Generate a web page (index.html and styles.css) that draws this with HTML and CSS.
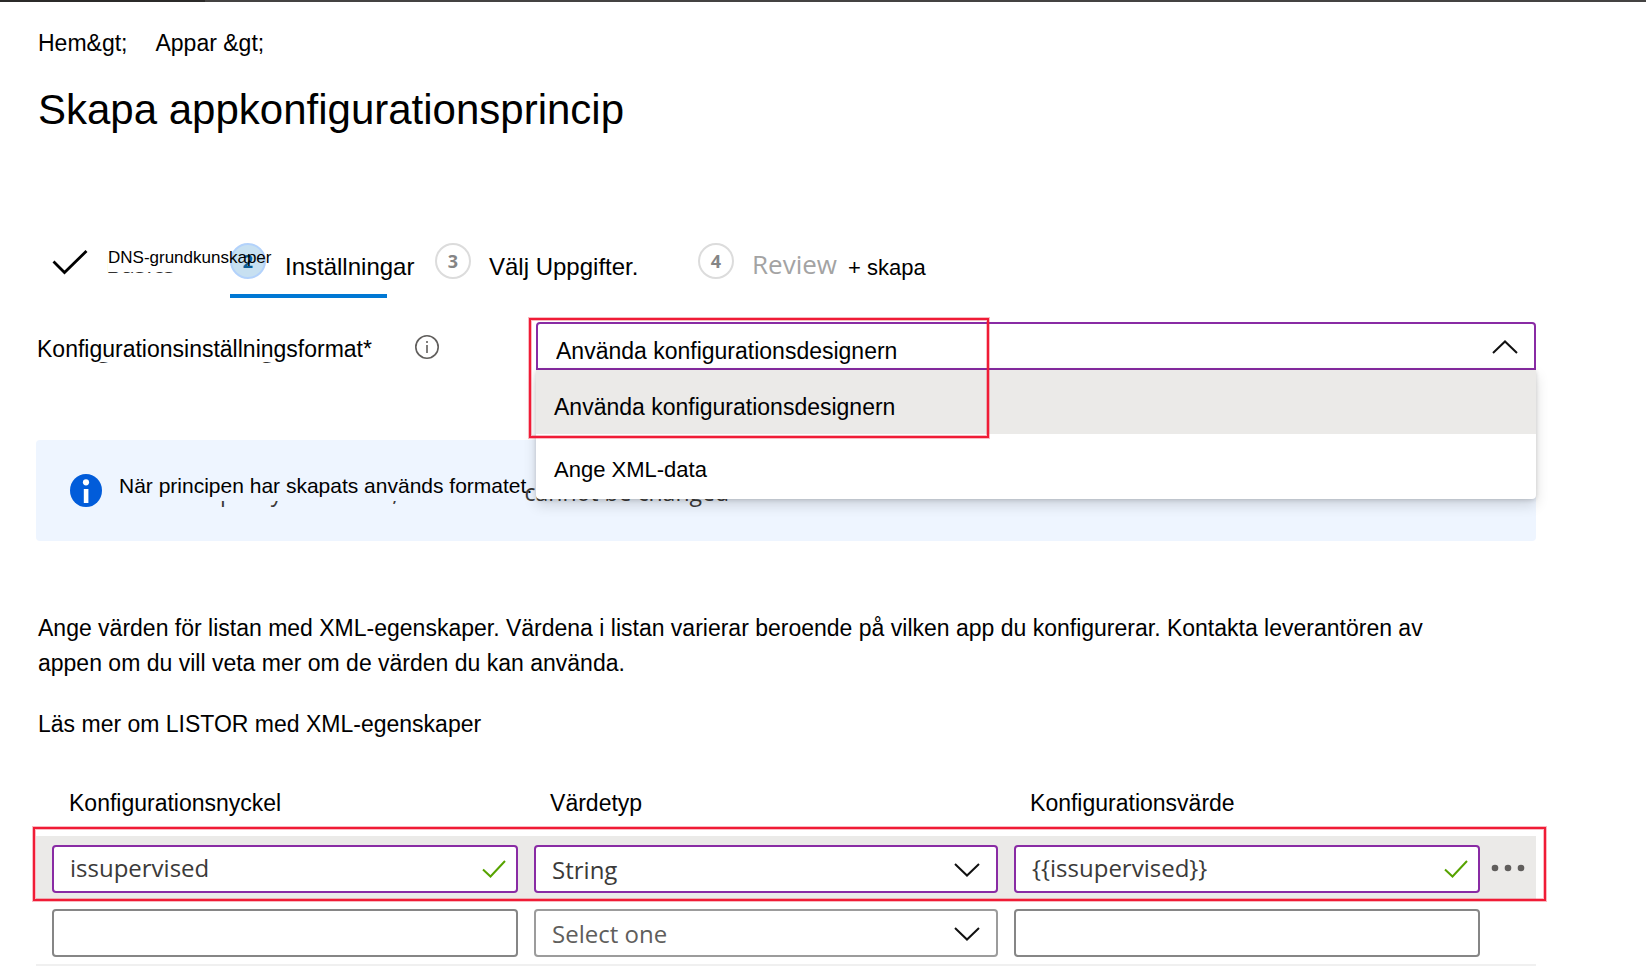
FILE: index.html
```html
<!DOCTYPE html>
<html lang="sv">
<head>
<meta charset="utf-8">
<title>Skapa appkonfigurationsprincip</title>
<link rel="stylesheet" href="styles.css">
</head>
<body>
<div class="topbar"><div class="topbar-brand"></div></div>
<main class="page">
  <nav class="breadcrumb">
    <a href="#hem">Hem&amp;gt;</a>
    <a href="#appar">Appar &amp;gt;</a>
  </nav>
  <h1 class="title">Skapa appkonfigurationsprincip</h1>

  <ol class="steps">
    <li class="step step-done">
      <svg class="step-check" viewBox="0 0 36 26" aria-hidden="true"><path d="M1.5 12.5 L12.5 23.5 L34.5 2"/></svg>
      <span class="step-stack">
        <span class="step-under">Basics</span>
        <span class="step-small">DNS-grundkunskaper</span>
      </span>
    </li>
    <li class="step step-active" aria-current="step">
      <span class="step-num">2</span><span class="step-text">Inställningar</span>
    </li>
    <li class="step step-third">
      <span class="step-num">3</span><span class="step-text">Välj Uppgifter.</span>
    </li>
    <li class="step">
      <span class="step-num">4</span><span class="step-review">Review</span><span class="step-create">+ skapa</span>
    </li>
  </ol>

  <div class="field">
    <div class="field-label">
      <span class="label-under" aria-hidden="true">Configuration settings</span>
      <label class="label-text" for="format">Konfigurationsinställningsformat*</label>
    </div>
    <svg class="field-info" viewBox="0 0 24 24" aria-hidden="true"><circle cx="12" cy="12" r="11.2"/><path d="M12 10v8"/><path d="M12 6v2"/></svg>
    <div class="combo">
      <select class="combo-select" id="format"><option>Använda konfigurationsdesignern</option></select>
      <svg class="chevron" viewBox="0 0 26 14" aria-hidden="true"><path d="M1 13 L13 1.5 L25 13"/></svg>
      <ul class="menu" role="listbox" aria-label="Format">
        <li class="menu-item menu-item-selected" role="option" aria-selected="true">Använda konfigurationsdesignern</li>
        <li class="menu-item" role="option" aria-selected="false">Ange XML-data</li>
      </ul>
      <div class="callout callout-combo"></div>
    </div>
  </div>

  <section class="banner">
    <svg class="banner-icon" viewBox="0 0 32 33" aria-hidden="true"><ellipse cx="16" cy="16.5" rx="16" ry="16.5" fill="#015cda"/><circle cx="16" cy="8.3" r="3.1" fill="#fff"/><path d="M13.8 15h4.6v14h-4.6z" fill="#fff"/></svg>
    <div class="banner-body">
      <span class="banner-under" aria-hidden="true">Once the policy is created, the format cannot be changed</span>
      <span class="banner-text">När principen har skapats används formatet.</span>
    </div>
  </section>

  <p class="copy">Ange värden för listan med XML-egenskaper. Värdena i listan varierar beroende på vilken app du konfigurerar. Kontakta leverantören av<br>appen om du vill veta mer om de värden du kan använda.</p>
  <p class="copy copy-link"><a href="#listor">Läs mer om LISTOR med XML-egenskaper</a></p>

  <table class="settings">
    <colgroup><col class="col-key"><col class="col-type"><col><col class="col-more"></colgroup>
    <thead>
      <tr><th id="h-key">Konfigurationsnyckel</th><th id="h-type">Värdetyp</th><th id="h-value">Konfigurationsvärde</th><td></td></tr>
    </thead>
    <tbody>
      <tr class="row-filled">
        <td><div class="control"><input class="box" type="text" value="issupervised" aria-labelledby="h-key"><svg class="valid" viewBox="0 0 24 18" aria-hidden="true"><path d="M1 9.5 L8.5 16.5 L23 1"/></svg></div></td>
        <td><div class="control"><select class="box" aria-labelledby="h-type"><option>String</option></select><svg class="chevron" viewBox="0 0 26 14" aria-hidden="true"><path d="M1 1 L13 12.5 L25 1"/></svg></div></td>
        <td><div class="control"><input class="box" type="text" value="{{issupervised}}" aria-labelledby="h-value"><svg class="valid" viewBox="0 0 24 18" aria-hidden="true"><path d="M1 9.5 L8.5 16.5 L23 1"/></svg></div></td>
        <td><button class="more" type="button" aria-label="Mer"><svg class="more-dots" viewBox="0 0 34 8" aria-hidden="true"><circle cx="4" cy="4" r="3.3"/><circle cx="17" cy="4" r="3.3"/><circle cx="30" cy="4" r="3.3"/></svg></button><div class="callout callout-row"></div></td>
      </tr>
      <tr class="row-empty">
        <td><div class="control"><input class="box" type="text" aria-labelledby="h-key"></div></td>
        <td><div class="control"><select class="box box-placeholder" aria-labelledby="h-type"><option>Select one</option></select><svg class="chevron" viewBox="0 0 26 14" aria-hidden="true"><path d="M1 1 L13 12.5 L25 1"/></svg></div></td>
        <td><div class="control"><input class="box" type="text" aria-labelledby="h-value"></div></td>
        <td></td>
      </tr>
    </tbody>
  </table>
</main>
</body>
</html>
```
FILE: styles.css
```css
* { box-sizing: border-box; }
body {
  margin: 0;
  background: #fff;
  color: #000;
  font: 23px/30px "Liberation Sans", Arial, sans-serif;
}
a { color: inherit; text-decoration: none; }
.topbar { height: 2px; background: #444342; }
.topbar-brand { width: 205px; height: 2px; background: #2b2a29; }
.page { padding: 26px 110px 0 36px; }

.breadcrumb { display: flex; gap: 28px; padding-left: 2px; }
.title {
  margin: 28px 0 0;
  padding-left: 2px;
  font-size: 42px;
  line-height: 48px;
  font-weight: 400;
}

/* Wizard steps */
.steps {
  display: flex;
  margin: 109px 0 0;
  padding: 0 0 0 16px;
  list-style: none;
  font-size: 24px;
  white-space: nowrap;
}
.step { position: relative; display: flex; flex: none; align-items: flex-start; height: 55px; }
.step-done { width: 178px; z-index: 1; }
.step-check { width: 36px; height: 26px; margin: 6px 20px 0 0; fill: none; stroke: #000; stroke-width: 2.8; }
.step-stack { position: relative; padding-top: 5px; }
.step-under {
  position: absolute;
  top: 4px;
  left: -2px;
  color: #323130;
  font: 24px/34px "Open Sans", sans-serif;
}
.step-small {
  position: relative;
  display: block;
  width: 122px;
  padding-bottom: 4px;
  background: #fff;
  font-size: 17px;
  line-height: 20px;
}
.step-active { width: 157px; margin-right: 48px; border-bottom: 4px solid #0078d4; }
.step-third { width: 263px; }
.step-num {
  flex: none;
  width: 36px;
  height: 36px;
  margin-right: 18px;
  border: 2px solid #dcdcdc;
  border-radius: 50%;
  color: #858585;
  font: 700 18px/32px "Open Sans", sans-serif;
  text-align: center;
}
.step-active .step-num { margin-right: 19px; border-color: #b3d2fb; background: #c7e0f1; color: #0b5c97; }
.step-text { padding-top: 9px; }
.step-review { padding-top: 3px; margin-right: 11px; color: #a3a3a3; font: 26px/36px "Open Sans", sans-serif; }
.step-create { padding-top: 10px; font-size: 22px; }

/* Format field */
.field { display: flex; align-items: flex-start; margin-top: 24px; }
.field-label { position: relative; flex: none; width: 379px; padding-top: 12px; padding-left: 1px; }
.label-under {
  position: absolute;
  top: 9px;
  left: 3px;
  color: #323130;
  font: 24px/34px "Open Sans", sans-serif;
}
.label-text { position: relative; display: block; height: 28px; background: #fff; }
.field-info { flex: none; width: 24px; height: 24px; margin: 13px 97px 0 0; fill: none; stroke: #605e5c; stroke-width: 1.6; }
.combo { position: relative; flex: 1; z-index: 2; }
.combo-select {
  display: block;
  width: 100%;
  height: 48px;
  padding: 9px 18px 0;
  border: 2px solid #892ba4;
  border-radius: 4px 4px 0 0;
  background: #fff;
  color: #000;
  font: 23px/30px "Liberation Sans", Arial, sans-serif;
  appearance: none;
}
.chevron {
  position: absolute;
  top: 18px;
  right: 18px;
  width: 26px;
  height: 14px;
  fill: none;
  stroke: #111;
  stroke-width: 2;
  pointer-events: none;
}
.menu {
  position: absolute;
  top: 100%;
  left: 0;
  right: 0;
  margin: 0;
  padding: 0;
  list-style: none;
  background: #fff;
  border-radius: 0 0 4px 4px;
  box-shadow: 0 6px 14px rgba(0, 0, 0, .14), 0 1px 4px rgba(0, 0, 0, .16);
}
.menu-item { height: 65px; padding: 21px 18px 0; font-size: 22px; }
.menu-item-selected { height: 64px; padding-top: 22px; background: #ebeae8; font-size: 23px; }
.callout {
  position: absolute;
  border: 2px solid #f01c36;
  box-shadow: 0 0 0 1px rgba(240, 28, 54, .3), inset 0 0 0 1px rgba(240, 28, 54, .3);
  pointer-events: none;
}
.callout-combo { top: -4px; bottom: -68px; left: -7px; width: 460px; }

/* Information banner */
.banner { display: flex; margin-top: 70px; padding: 34px; border-radius: 4px; background: #eef5ff; }
.banner-icon { flex: none; width: 32px; height: 33px; margin-right: 14px; }
.banner-body { position: relative; flex: 1; height: 33px; margin-top: -1px; white-space: nowrap; }
.banner-under {
  position: absolute;
  top: 3px;
  left: 1px;
  color: #3b3a39;
  font: 23px/32px "Open Sans", sans-serif;
}
.banner-text {
  position: relative;
  display: block;
  padding: 0 0 2px 3px;
  background: linear-gradient(#eef5ff, #eef5ff) 0 0 / 406px 100% no-repeat;
  font-size: 21px;
  line-height: 26px;
}

.copy { margin: 70px 0 0; padding-left: 2px; line-height: 35px; }
.copy-link { margin-top: 26px; }

/* Settings table */
.settings { width: 100%; margin-top: 46px; border-collapse: separate; border-spacing: 0; table-layout: fixed; }
.col-key { width: 32.67%; }
.col-type { width: 32%; }
.col-more { width: 48px; }
.settings th { padding: 0 0 18px 24px; font-weight: 400; text-align: left; }
.settings th:first-child { padding-left: 33px; }
.settings tbody td { padding: 9px 8px 7px; }
.settings tbody td:first-child { padding-left: 16px; }
.settings tbody td:last-child { padding-left: 0; padding-right: 0; }
.row-filled { position: relative; }
.row-filled td { background: #ebeae8; }
.row-empty td { border-bottom: 2px solid #f0f0f0; }
.control { position: relative; }
.box {
  display: block;
  width: 100%;
  height: 48px;
  padding: 0 16px 3px;
  border: 2px solid #868686;
  border-radius: 4px;
  background: #fff;
  color: #3b3a39;
  font: 24px/34px "Open Sans", sans-serif;
  appearance: none;
}
select.box { padding-top: 1px; padding-bottom: 0; border-color: #9c9c9c; }
.row-filled .box { border-color: #892ba4; }
.row-empty .box-placeholder { color: #605e5c; }
.valid { position: absolute; top: 15px; right: 12px; width: 24px; height: 18px; fill: none; stroke: #57a300; stroke-width: 2; }
.more { display: block; width: 100%; height: 48px; padding: 0; border: 0; background: none; }
.more-dots { display: block; width: 34px; height: 8px; margin: 0 0 2px 3px; fill: #605e5c; }
.callout-row { top: -9px; right: -10px; bottom: -1px; left: -3px; }
```
